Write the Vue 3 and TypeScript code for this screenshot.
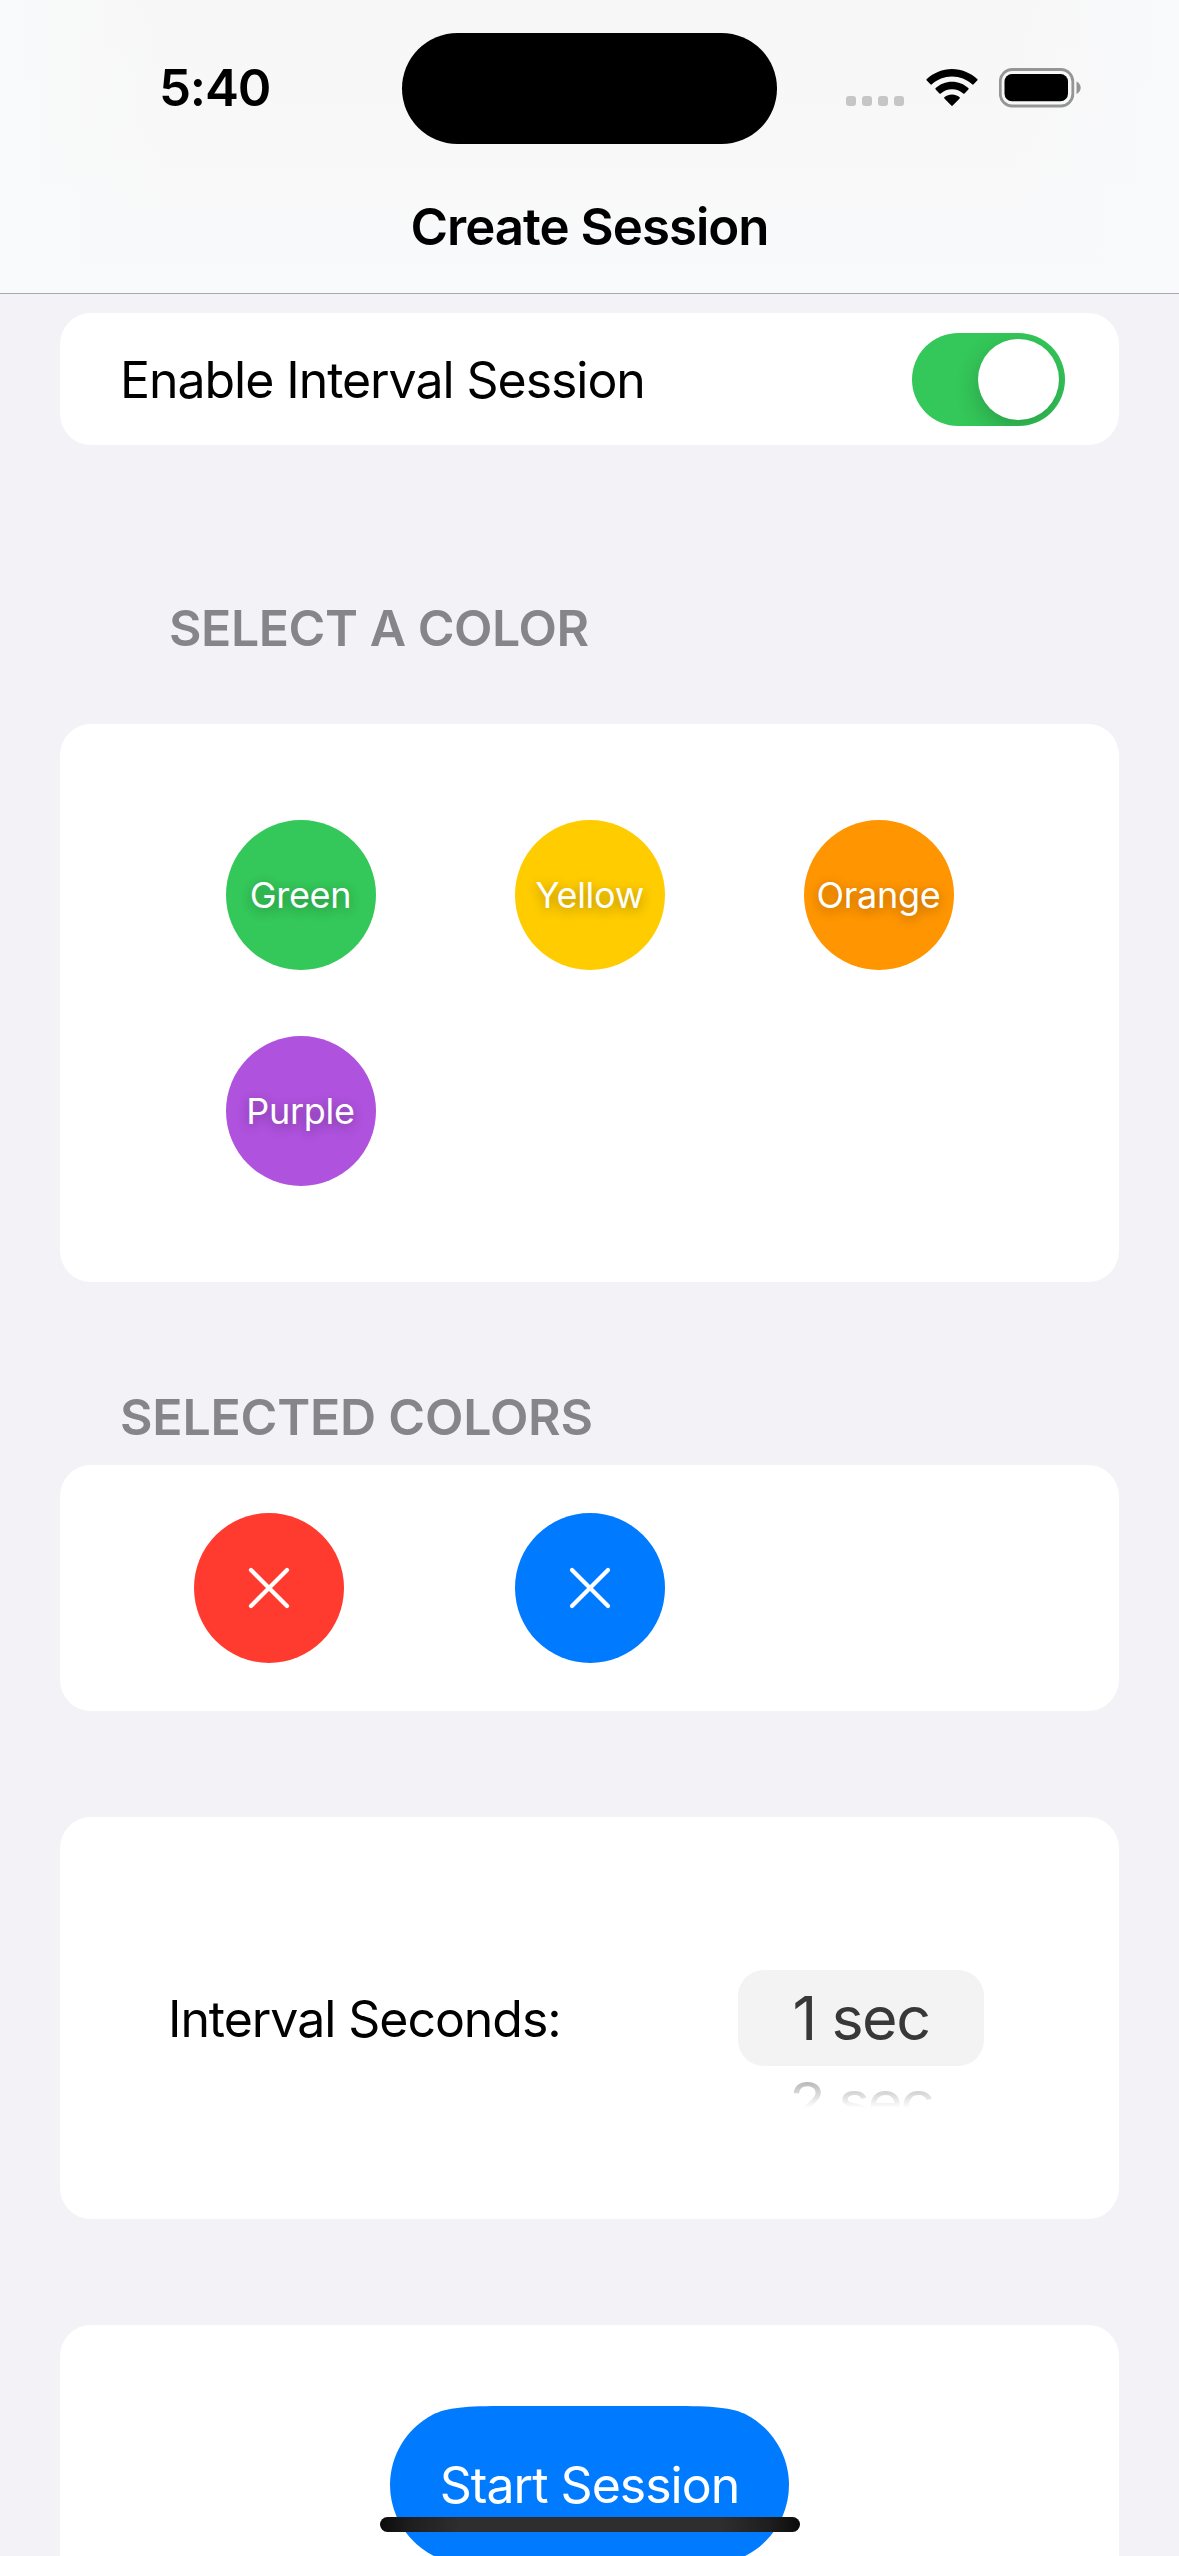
<script setup lang="ts">
import { ref } from 'vue'

interface Swatch {
  name: string
  hex: string
}

const available: Swatch[] = [
  { name: 'Green', hex: '#34c759' },
  { name: 'Yellow', hex: '#ffcc00' },
  { name: 'Orange', hex: '#ff9500' },
  { name: 'Purple', hex: '#af52de' },
]

const selected: Swatch[] = [
  { name: 'Red', hex: '#ff3b30' },
  { name: 'Blue', hex: '#007aff' },
]

const intervalEnabled = ref(true)
</script>

<template>
  <div class="screen">
    <header class="top">
      <div class="status">
        <div class="time">5:40</div>
        <div class="island"></div>
        <div class="indicators">
          <div class="cell"><i v-for="n in 4" :key="n"></i></div>
          <svg class="wifi" width="52" height="38" viewBox="0 0 52 38">
            <path d="M0.8 11.6a1 1 0 0 1 0-1.5C7.600 3.800 16.400 0 26 0s18.400 3.800 25.200 10.100a1 1 0 0 1 0 1.500l-3.600 3.700a1 1 0 0 1-1.500 0C40.700 10.400 33.700 7.500 26 7.500S11.300 10.400 5.900 15.300a1 1 0 0 1-1.500 0z" />
            <path d="M9.700 20.600a1 1 0 0 1 0-1.500C14 15.200 19.700 12.800 26 12.800s12 2.400 16.300 6.300a1 1 0 0 1 0 1.500l-3.700 3.800a1 1 0 0 1-1.400 0C34.200 21.800 30.300 20.200 26 20.200s-8.200 1.600-11.200 4.200a1 1 0 0 1-1.400 0z" />
            <path d="M18.600 29.700a1 1 0 0 1 0-1.600C20.600 26.400 23.200 25.400 26 25.400s5.400 1 7.400 2.700a1 1 0 0 1 0 1.600l-6.700 6.900a1 1 0 0 1-1.400 0z" />
          </svg>
          <svg class="battery" width="83" height="40" viewBox="0 0 83 40">
            <rect x="1.300" y="1.500" width="72.500" height="36.500" rx="12" fill="none" stroke="#959595" stroke-width="2.800" />
            <rect x="5.500" y="6" width="63.500" height="27.300" rx="7.500" />
            <path d="M77.500 13.500c2.400 1.100 4.200 3.500 4.200 6.300s-1.800 5.200-4.200 6.300z" fill="#959595" />
          </svg>
        </div>
      </div>
      <h1>Create Session</h1>
    </header>

    <main>
      <section class="card toggle-row">
        <span class="label enable">Enable Interval Session</span>
        <button class="switch" :class="{ on: intervalEnabled }" @click="intervalEnabled = !intervalEnabled">
          <span class="knob"></span>
        </button>
      </section>

      <h2 class="select-title">SELECT A COLOR</h2>
      <section class="card palette">
        <div v-for="c in available" :key="c.name" class="slot">
          <div class="disc" :style="{ background: c.hex }">{{ c.name }}</div>
        </div>
      </section>

      <h2 class="selected-title">SELECTED COLORS</h2>
      <section class="card chosen">
        <div v-for="c in selected" :key="c.name" class="slot">
          <div class="disc" :style="{ background: c.hex }">
            <svg width="42" height="42" viewBox="0 0 42 42">
              <path d="M3 3L39 39M39 3L3 39" stroke="#fff" stroke-width="4.200" stroke-linecap="round" />
            </svg>
          </div>
        </div>
      </section>

      <section class="card interval">
        <span class="label seconds">Interval Seconds:</span>
        <div class="picker">
          <div class="current">1 sec</div>
          <div class="next"><span>2 sec</span></div>
        </div>
      </section>

      <section class="card start">
        <button class="go">
          <svg class="shape" width="399" height="158" viewBox="0 0 399 158">
            <path d="M0 79C0 49 17 22 43 8.500C57 1.500 75 0 117 0H282C324 0 342 1.500 356 8.500C382 22 399 49 399 79S382 136 356 149.500C342 156.500 324 158 282 158H117C75 158 57 156.500 43 149.500C17 136 0 109 0 79Z" fill="#007aff" />
          </svg>
          <span>Start Session</span>
        </button>
      </section>
    </main>

    <div class="home-bar"></div>
  </div>
</template>

<style>
body {
  margin: 0;
  background: #f2f2f7;
}
</style>

<style scoped>
.screen {
  position: relative;
  width: 1179px;
  height: 2556px;
  overflow: hidden;
  background: #f2f2f7;
  color: #000;
  font-family: Inter, 'Liberation Sans', sans-serif;
}

.top {
  box-sizing: border-box;
  height: 294px;
  border-bottom: 1px solid #a9a9ad;
  background: linear-gradient(90deg, #f9fafb 0, rgba(249, 250, 251, 0) 180px, rgba(249, 250, 251, 0) 1000px, #f9fafc 100%),
    linear-gradient(180deg, #f7f7f7 0, #f8f8f8 50%, #f9fafc 100%);
}

.status {
  display: grid;
  grid-template-columns: 402px 375px 402px;
  height: 177px;
}

.time {
  padding: 58px 0 0 159px;
  font-size: 51px;
  font-weight: 600;
  line-height: 60px;
  letter-spacing: -1.200px;
}

.island {
  height: 111px;
  margin-top: 33px;
  border-radius: 56px;
  background: #000;
}

.indicators {
  display: flex;
  align-items: flex-start;
  padding-left: 69px;
}

.cell {
  display: flex;
  gap: 6px;
  margin-top: 96px;
}

.cell i {
  width: 10px;
  height: 10px;
  border-radius: 3px;
  background: #c6c6c6;
}

.wifi {
  margin: 69px 0 0 22px;
}

.battery {
  margin: 68px 0 0 21px;
}

h1 {
  margin: 20px 0 0;
  font-size: 51px;
  font-weight: 600;
  line-height: 60px;
  letter-spacing: -1px;
  text-align: center;
}

main {
  padding: 19px 60px 0;
}

.card {
  box-sizing: border-box;
  border-radius: 31px;
  background: #fff;
}

.label {
  padding-top: 2px;
  font-size: 50px;
  line-height: 60px;
  letter-spacing: -1.050px;
}

.toggle-row {
  display: flex;
  align-items: center;
  justify-content: space-between;
  height: 132px;
  padding: 0 54px 0 60px;
}

.switch {
  display: flex;
  align-items: center;
  width: 153px;
  height: 93px;
  padding: 0 6px;
  border: 0;
  border-radius: 47px;
  background: #e9e9eb;
  overflow: hidden;
}

.switch.on {
  justify-content: flex-end;
  background: #34c759;
}

.knob {
  width: 81px;
  height: 81px;
  border-radius: 50%;
  background: #fff;
  box-shadow: 0 9px 24px rgba(0, 0, 0, 0.2);
}

h2 {
  margin: 0;
  color: #86858a;
  font-size: 50px;
  font-weight: 600;
  line-height: 60px;
}

.select-title {
  padding: 153px 0 66px 109px;
  letter-spacing: -0.450px;
}

.selected-title {
  padding: 105px 0 18px 60px;
  letter-spacing: -0.200px;
}

.palette {
  display: grid;
  grid-template-columns: repeat(3, 1fr);
  row-gap: 66px;
  height: 558px;
  padding: 96px;
  align-content: start;
}

.chosen {
  display: grid;
  grid-template-columns: repeat(3, 1fr);
  height: 246px;
  padding: 48px;
}

.slot {
  display: flex;
  justify-content: center;
}

.disc {
  display: flex;
  align-items: center;
  justify-content: center;
  width: 150px;
  height: 150px;
  border-radius: 50%;
  color: #fff;
  font-size: 36px;
  letter-spacing: -0.300px;
  text-shadow: 0 3px 12px rgba(0, 0, 0, 0.33);
}

.interval {
  display: flex;
  align-items: center;
  justify-content: space-between;
  height: 402px;
  margin-top: 106px;
  padding: 0 135px 0 108px;
}

.picker {
  display: flex;
  flex-direction: column;
  width: 246px;
  height: 96px;
  font-size: 61px;
  text-align: center;
}

.current {
  flex: none;
  height: 96px;
  border-radius: 26px;
  background: #f3f3f3;
  color: #383838;
  line-height: 96px;
  letter-spacing: -1.500px;
}

.next {
  flex: none;
  height: 42px;
  overflow: hidden;
  line-height: 70px;
  color: #a8a8a8;
  -webkit-mask-image: linear-gradient(#000 10px, transparent 42px);
  mask-image: linear-gradient(#000 10px, transparent 42px);
}

.next span {
  display: block;
  font-size: 60px;
  letter-spacing: -2.200px;
  transform: scaleY(0.87);
}

.start {
  display: flex;
  justify-content: center;
  height: 320px;
  margin-top: 106px;
  padding-top: 81px;
}

.go {
  position: relative;
  width: 399px;
  height: 158px;
  padding: 0;
  border: 0;
  background: none;
  color: #fff;
  font-family: inherit;
  font-size: 50px;
  line-height: 60px;
  letter-spacing: -1px;
}

.shape {
  position: absolute;
  inset: 0;
}

.go span {
  position: relative;
}

.home-bar {
  position: absolute;
  left: 380px;
  bottom: 24px;
  width: 420px;
  height: 15px;
  border-radius: 8px;
  background: linear-gradient(90deg, #0b0b0b 0, #1e1e1e 30px, #2e2e2e 80px, #2e2e2e 340px, #1e1e1e 390px, #0b0b0b 100%);
}
</style>
